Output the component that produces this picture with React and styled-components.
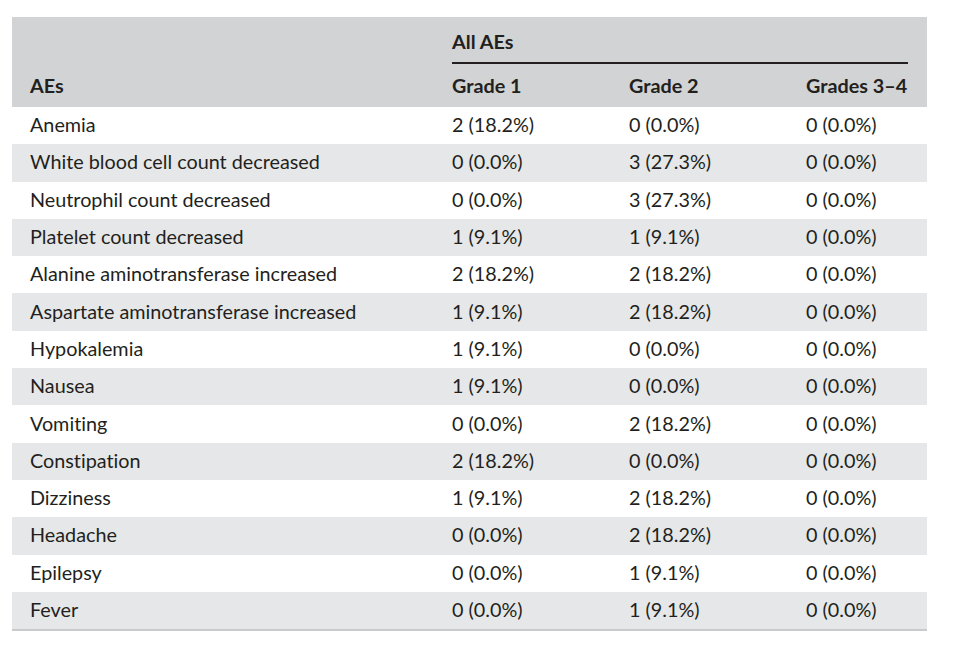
import React from "react";
import styled, { createGlobalStyle } from "styled-components";

const rows = [
  ["Anemia", "2 (18.2%)", "0 (0.0%)", "0 (0.0%)"],
  ["White blood cell count decreased", "0 (0.0%)", "3 (27.3%)", "0 (0.0%)"],
  ["Neutrophil count decreased", "0 (0.0%)", "3 (27.3%)", "0 (0.0%)"],
  ["Platelet count decreased", "1 (9.1%)", "1 (9.1%)", "0 (0.0%)"],
  ["Alanine aminotransferase increased", "2 (18.2%)", "2 (18.2%)", "0 (0.0%)"],
  ["Aspartate aminotransferase increased", "1 (9.1%)", "2 (18.2%)", "0 (0.0%)"],
  ["Hypokalemia", "1 (9.1%)", "0 (0.0%)", "0 (0.0%)"],
  ["Nausea", "1 (9.1%)", "0 (0.0%)", "0 (0.0%)"],
  ["Vomiting", "0 (0.0%)", "2 (18.2%)", "0 (0.0%)"],
  ["Constipation", "2 (18.2%)", "0 (0.0%)", "0 (0.0%)"],
  ["Dizziness", "1 (9.1%)", "2 (18.2%)", "0 (0.0%)"],
  ["Headache", "0 (0.0%)", "2 (18.2%)", "0 (0.0%)"],
  ["Epilepsy", "0 (0.0%)", "1 (9.1%)", "0 (0.0%)"],
  ["Fever", "0 (0.0%)", "1 (9.1%)", "0 (0.0%)"],
];

const GlobalStyle = createGlobalStyle`
  body {
    margin: 0;
    background: #ffffff;
    font-family: Lato, "Open Sans", sans-serif;
    color: #231f20;
    font-variant-ligatures: none;
  }
`;

const Table = styled.div`
  width: 915px;
  margin: 17px 0 0 12px;
  border-bottom: 2px solid #c8cacc;
  font-size: 19.8px;
`;

const Head = styled.div`
  display: grid;
  grid-template-columns: 440px 177px 177px 1fr;
  grid-template-rows: 47px 43px;
  background: #d1d3d4;
  font-weight: 700;
`;

const Spanner = styled.div`
  grid-column: 2 / 5;
  grid-row: 1;
  margin-right: 19px;
  display: flex;
  align-items: center;
  border-bottom: 2px solid #231f20;
  padding-top: 2px;
`;

const HeadCell = styled.div`
  grid-row: 2;
  grid-column: ${(p) => p.$col};
  display: flex;
  align-items: center;
  padding-bottom: 2px;
  padding-left: ${(p) => (p.$col === 1 ? "18px" : "0")};
`;

const Row = styled.div`
  display: grid;
  grid-template-columns: 440px 177px 177px 1fr;
  height: 37.3px;
  align-items: center;
  background: ${(p) => (p.$shaded ? "#e6e7e8" : "#ffffff")};
`;

const Cell = styled.div`
  padding-left: ${(p) => (p.$first ? "18px" : "0")};
  padding-bottom: 3px;
  white-space: nowrap;
`;

export default function App() {
  return (
    <>
      <GlobalStyle />
      <Table>
        <Head>
          <Spanner>All AEs</Spanner>
          <HeadCell $col={1}>AEs</HeadCell>
          <HeadCell $col={2}>Grade 1</HeadCell>
          <HeadCell $col={3}>Grade 2</HeadCell>
          <HeadCell $col={4}>Grades 3–4</HeadCell>
        </Head>
        {rows.map((r, i) => (
          <Row key={r[0]} $shaded={i % 2 === 1}>
            {r.map((c, j) => (
              <Cell key={j} $first={j === 0}>{c}</Cell>
            ))}
          </Row>
        ))}
      </Table>
    </>
  );
}
